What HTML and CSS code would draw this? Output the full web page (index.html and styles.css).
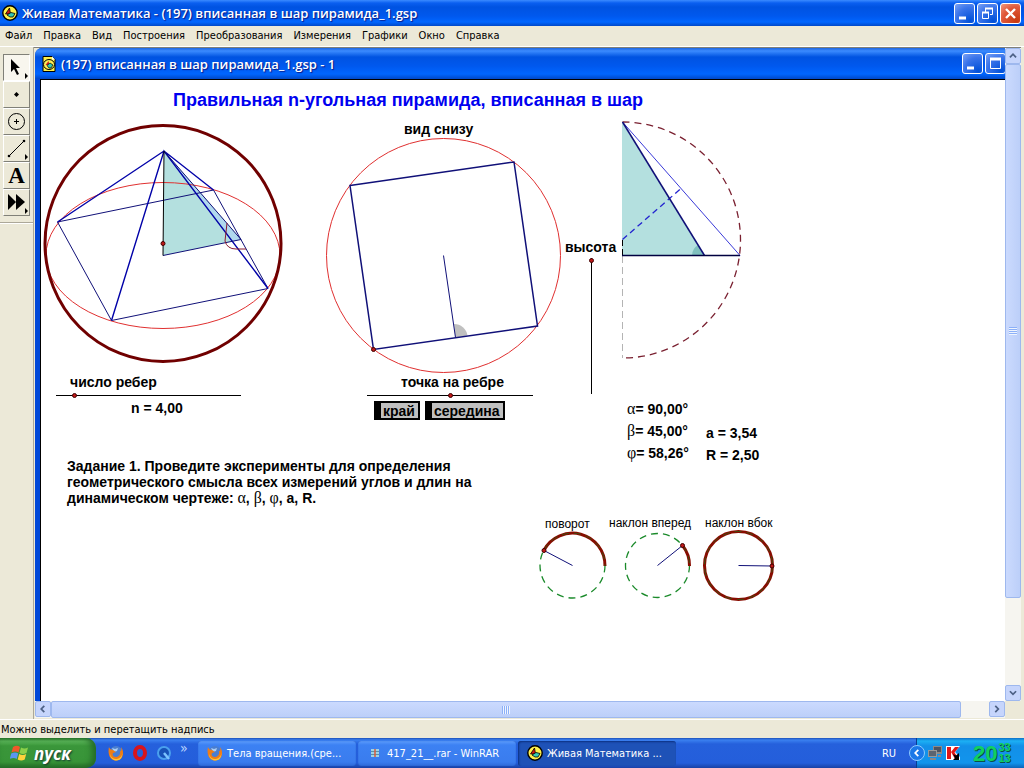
FILE: index.html
```html
<!DOCTYPE html>
<html lang="ru">
<head>
    <meta charset="UTF-8">
    <meta name="viewport" content="width=device-width, initial-scale=1.0">
    <title>Живая Математика</title>
    <link rel="stylesheet" href="styles.css">
</head>
<body>
    <svg width="0" height="0" class="defs">
        <symbol id="app-icon" viewBox="0 0 16 16">
            <circle cx="8" cy="8" r="7.2" fill="#fff04a" stroke="#000" stroke-width="1.4"/>
            <path d="M7.5 3l-4 6h5z" fill="#d41a10" stroke="#000" stroke-width=".8"/>
            <path d="M5 10l4-2.500 4 1-2 3.500H8z" fill="#35c9b4" stroke="#000" stroke-width=".8"/>
        </symbol>
        <symbol id="firefox" viewBox="0 0 16 16">
            <circle cx="8" cy="7.500" r="6.500" fill="#4a7ed0"/>
            <path d="M4 3l3 1 3-1-1 3-3 1z" fill="#a9cdf5"/>
            <path d="M1 2C0 6 0 15 8 15.500 16 15.500 16.500 6 13 2c1 3 0 4-1 4 1 4-2 6-4 6-3 0-4-2-3-4l3-1-3-2C3 5 1.500 4 1 2z" fill="#ef7d16"/>
            <path d="M2 9c1 4 4 5.500 7 5 3-.5 5-3 5.500-6-.5 7-4 7.500-6.500 7.500S2 13 2 9z" fill="#ffc233"/>
        </symbol>
    </svg>

    <header class="titlebar">
        <svg class="icon16"><use href="#app-icon"/></svg>
        <h1>Живая Математика - (197) вписанная в шар пирамида_1.gsp</h1>
        <div class="controls">
            <button class="ctl" aria-label="Свернуть"><svg viewBox="0 0 19 19"><path d="M4 14h7" stroke-width="3"/></svg></button>
            <button class="ctl" aria-label="Восстановить"><svg viewBox="0 0 19 19"><path d="M7.500 8V4.500h7v6H12M4.500 8.500h6v6h-6z"/><path d="M7 4.500h8M4 8.500h7" stroke-width="2"/></svg></button>
            <button class="ctl close" aria-label="Закрыть"><svg viewBox="0 0 19 19"><path d="M5 5l9 9M14 5l-9 9" stroke-width="2.400"/></svg></button>
        </div>
    </header>

    <nav class="menubar">
        <a href="#">Файл</a>
        <a href="#">Правка</a>
        <a href="#">Вид</a>
        <a href="#">Построения</a>
        <a href="#">Преобразования</a>
        <a href="#">Измерения</a>
        <a href="#">Графики</a>
        <a href="#">Окно</a>
        <a href="#">Справка</a>
    </nav>

    <div class="main">
        <aside class="toolbox">
            <div class="tools">
                <button class="tool active" aria-label="Стрелка"><svg viewBox="0 0 25 25"><path d="M7 4v13l3-3 3 6 2-1-3-6h4z"/><path d="M21 18v6l3-3z"/></svg></button>
                <button class="tool" aria-label="Точка"><svg viewBox="0 0 25 25"><path d="M12.500 10l2.500 2.500-2.500 2.500-2.500-2.500z"/></svg></button>
                <button class="tool" aria-label="Окружность"><svg viewBox="0 0 25 25"><circle cx="12.500" cy="12.500" r="8" fill="none" stroke="#000"/><path d="M12.500 10v5M10 12.500h5" stroke="#000"/></svg></button>
                <button class="tool" aria-label="Отрезок"><svg viewBox="0 0 25 25"><path d="M5 20L20 5" stroke="#000"/><circle cx="5" cy="20" r="1.300"/><circle cx="20" cy="5" r="1.300"/><path d="M21 18v6l3-3z"/></svg></button>
                <button class="tool letter">A</button>
                <button class="tool" aria-label="Свои инструменты"><svg viewBox="0 0 25 25"><path d="M4 4v16l8-8zM12 4v16l9-8z"/><path d="M21 18v6l3-3z"/></svg></button>
            </div>
        </aside>

        <div class="mdi">
            <section class="child">
                <div class="titlebar child-title">
                    <svg class="icon16" viewBox="0 0 16 16">
                        <path d="M2 .5h9l3 3v12H2z" fill="#fff04a" stroke="#000"/>
                        <path d="M11 .5l3 3h-3z" fill="#fff"/>
                        <ellipse cx="8" cy="8.500" rx="5.500" ry="5" fill="#ffee55" stroke="#000"/>
                        <path d="M7.500 5l-3 4h4z" fill="#c22"/>
                        <path d="M6 9.500l3-2.500 3 2-2 3H8z" fill="#35c9b4" stroke="#000" stroke-width=".7"/>
                    </svg>
                    <h2>(197) вписанная в шар пирамида_1.gsp - 1</h2>
                    <div class="controls">
                        <button class="ctl" aria-label="Свернуть окно"><svg viewBox="0 0 19 19"><path d="M4 14h7" stroke-width="3"/></svg></button>
                        <button class="ctl" aria-label="Развернуть окно"><svg viewBox="0 0 19 19"><path d="M4.500 4.500h10v10h-10z"/><path d="M4 5h11" stroke-width="3"/></svg></button>
                        <button class="ctl close" aria-label="Закрыть окно"><svg viewBox="0 0 19 19"><path d="M5 5l9 9M14 5l-9 9" stroke-width="2.400"/></svg></button>
                    </div>
                </div>

                <div class="canvas">
                    <svg class="drawing">
                        <g transform="translate(-41 -80)" fill="none">
                            <!-- pyramid inside the sphere -->
                            <path d="M164 151L163 255.500 241 239.500z" fill="#b4e0df"/>
                            <path d="M164 151L233.500 241 241 239.500z" fill="#b0d8ee"/>
                            <ellipse cx="163" cy="255.500" rx="117" ry="73" class="red"/>
                            <circle cx="163" cy="243.500" r="118" class="sphere"/>
                            <path d="M57.500 222L213.500 190 268 288.500 111.500 320.500z" class="navy"/>
                            <path d="M57.500 222L164 151 213.500 190M111.500 320.500L164 151 268 288.500" class="blue"/>
                            <path d="M163 255.500L241 239.500 164 151" class="navy"/>
                            <path d="M164 151L163 255.500" stroke="#000"/>
                            <path d="M227 223L225 241Q227 249 236 249L246 249" stroke="#8a1a30"/>
                            <circle cx="163" cy="243.500" r="2" class="dot"/>

                            <!-- bottom view -->
                            <path d="M455.500 337.500L454 324A13.500 13.500 0 0 1 467.500 335.500z" fill="#c0c0c0"/>
                            <circle cx="443.500" cy="255.500" r="117" class="red"/>
                            <path d="M350 185.500L514 162 537.500 326 373.500 349.500z" class="navy thick"/>
                            <path d="M443.500 255.500L455.500 337.500" class="navy"/>
                            <circle cx="373.500" cy="349.500" r="2" class="dot"/>

                            <!-- half of the axial section -->
                            <path d="M622 122V255.500H705z" fill="#b4e0df"/>
                            <path d="M692 255.500A12.500 12.500 0 0 1 698 245L704.500 255.500z" fill="#80c0be"/>
                            <path d="M622.500 122A118 118 0 0 1 622.500 358" class="arc"/>
                            <path d="M622.500 256V358" stroke="#b4b4b4" stroke-dasharray="7 4"/>
                            <path d="M622.500 240V255" stroke="#000" stroke-dasharray="6 3"/>
                            <path d="M622.500 122L740 255.500" stroke="#3a3ad8"/>
                            <path d="M622.500 239.500L681 188.500" stroke="#2222d0" stroke-width="1.300" stroke-dasharray="6 4"/>
                            <path d="M622.500 122L704.500 255.500" class="navy thick"/>
                            <path d="M622 255.500H740" stroke="#000040" stroke-width="1.400"/>

                            <!-- rotation dials -->
                            <circle cx="572.500" cy="565.500" r="32.500" class="dial"/>
                            <path d="M544 550A32.500 32.500 0 0 1 605 566" class="turn"/>
                            <path d="M544 550A32.500 32.500 0 0 1 605 566" class="turn-dash"/>
                            <path d="M572.500 565.500L544 550.500" class="navy"/>
                            <circle cx="544" cy="550.500" r="2" class="dot"/>
                            <circle cx="657.500" cy="565.500" r="32" class="dial"/>
                            <path d="M682.500 545.500A32 32 0 0 1 689.500 566" class="turn"/>
                            <path d="M682.500 545.500A32 32 0 0 1 689.500 566" class="turn-dash"/>
                            <path d="M657.500 565.500L682.500 545.500" class="navy"/>
                            <circle cx="682.500" cy="545.500" r="2" class="dot"/>
                            <circle cx="738.500" cy="565.500" r="34" class="turn"/>
                            <circle cx="738.500" cy="565.500" r="34" class="turn-dash"/>
                            <path d="M738.500 565.500L772 566" class="navy"/>
                            <circle cx="772" cy="566" r="2" class="dot"/>
                        </g>
                    </svg>

                    <h3 class="item heading">Правильная n-угольная пирамида, вписанная в шар</h3>
                    <span class="item bottom-view">вид снизу</span>
                    <label class="item edges-label" for="edges">число ребер</label>
                    <input class="item edges" id="edges" type="range" min="0" max="100" value="9">
                    <span class="item edges-value">n = 4,00</span>
                    <label class="item point-label" for="point">точка на ребре</label>
                    <input class="item point" id="point" type="range" min="0" max="100" value="50">
                    <div class="item actions">
                        <button>край</button>
                        <button>середина</button>
                    </div>
                    <label class="item height-label" for="height">высота</label>
                    <input class="item height" id="height" type="range" min="0" max="100" value="100">
                    <div class="item angles">
                        <div><i>α</i>= 90,00°</div>
                        <div><i>β</i>= 45,00°</div>
                        <div><i>φ</i>= 58,26°</div>
                    </div>
                    <div class="item lengths">
                        <div>a = 3,54</div>
                        <div>R = 2,50</div>
                    </div>
                    <p class="item task">Задание 1. Проведите эксперименты для определения<br>геометрического смысла всех измерений углов и длин на<br>динамическом чертеже: <i>α</i>, <i>β</i>, <i>φ</i>, a, R.</p>
                    <span class="item small turn-label">поворот</span>
                    <span class="item small forward-label">наклон вперед</span>
                    <span class="item small side-label">наклон вбок</span>
                </div>
            </section>

            <div class="scroll vertical">
                <button aria-label="Вверх"><svg viewBox="0 0 16 16"><path d="M4.500 9.500L8 6l3.500 3.500"/></svg></button>
                <div class="track"><div class="thumb"></div></div>
                <button aria-label="Вниз"><svg viewBox="0 0 16 16"><path d="M4.500 6L8 9.500 11.500 6"/></svg></button>
            </div>
            <div class="scroll horizontal">
                <button aria-label="Влево"><svg viewBox="0 0 16 16"><path d="M9.500 4.500L6 8l3.500 3.500"/></svg></button>
                <div class="track"><div class="thumb"></div></div>
                <button aria-label="Вправо"><svg viewBox="0 0 16 16"><path d="M6 4.500L9.500 8 6 11.500"/></svg></button>
            </div>
        </div>
    </div>

    <div class="status">Можно выделить и перетащить надпись</div>

    <footer class="taskbar">
        <button class="start">
            <svg viewBox="0 0 20 20">
                <path d="M3 4q4-2.500 7 0L8.500 9.500q-3-2-7 0z" fill="#f0582a"/>
                <path d="M11 4.500q3.500 2 7 0L16.500 10q-3.500 2-7 0z" fill="#8cd04a"/>
                <path d="M1.200 10.500q4-2 7 0L6.700 16q-3-2-7 0z" fill="#5a96f0"/>
                <path d="M9.200 11q3.500 2 7 0l-1.500 5.500q-3.500 2-7 0z" fill="#ffd23c"/>
            </svg>
            пуск
        </button>
        <div class="quick">
            <a href="#" aria-label="Firefox"><svg class="icon16"><use href="#firefox"/></svg></a>
            <a href="#" aria-label="Opera"><svg class="icon16" viewBox="0 0 16 16"><ellipse cx="8" cy="8" rx="5" ry="6" fill="none" stroke="#d8141c" stroke-width="4"/></svg></a>
            <a href="#" aria-label="QuickTime"><svg class="icon16" viewBox="0 0 16 16"><circle cx="8" cy="8" r="6" fill="#1752b8" stroke="#4aa0ee" stroke-width="2"/><path d="M8 8l5 6" stroke="#7cc4ff" stroke-width="2.500"/></svg></a>
            <span class="more">»</span>
        </div>
        <div class="tasks">
            <button class="task-btn"><svg class="icon16"><use href="#firefox"/></svg>Тела вращения.(сре...</button>
            <button class="task-btn"><svg class="icon16" viewBox="0 0 16 16"><path d="M4 4h8v8H4z" fill="#9cd3e8"/><path d="M4 6.500h8M4 9.500h8" stroke="#5a8fa8"/><path d="M8 4v8" stroke="#d85b3c" stroke-width="1.500"/></svg>417_21__.rar - WinRAR</button>
            <button class="task-btn current"><svg class="icon16"><use href="#app-icon"/></svg>Живая Математика ...</button>
        </div>
        <span class="lang">RU</span>
        <div class="tray">
            <button class="expand" aria-label="Показать значки"><svg viewBox="0 0 16 16"><path d="M9.500 4.500L6 8l3.500 3.500" fill="none" stroke="#fff" stroke-width="2"/></svg></button>
            <svg class="icon16" viewBox="0 0 16 16"><path d="M6 1h9v8H6z" fill="#8a8a8a"/><path d="M7 2h7v5H7z" fill="#4c5360"/><path d="M1 5h9v7H1z" fill="#999"/><path d="M2 6h7v5H2z" fill="#5b6470"/><path d="M3 13h6v2H3zM11 10h3v2h-3z" fill="#888"/></svg>
            <svg class="icon16" viewBox="0 0 16 16"><path d="M1 1h14L10 7l5 5v3H1z" fill="#fff"/><path d="M2 2h4v12H2zM6 7l4-5h4L9.500 7.500 14 14h-4z" fill="#e01818"/><path d="M8 9l3 1.500L14 8v7H8l2-2z" fill="#000"/></svg>
            <div class="clock"><b>20</b><span>33<br>13</span></div>
        </div>
    </footer>
</body>
</html>
```
FILE: styles.css
```css
* {
    box-sizing: border-box;
}
body {
    margin: 0;
    height: 100vh;
    display: flex;
    flex-direction: column;
    overflow: hidden;
    background: #ece9d8;
    color: #000;
    font-family: "DejaVu Sans Condensed", "Noto Sans", sans-serif;
    font-size: 11px;
}
button {
    font: inherit;
    padding: 0;
    border: 0;
}
a {
    color: inherit;
    text-decoration: none;
}
svg {
    display: block;
}
.defs {
    position: absolute;
}
.icon16 {
    width: 16px;
    height: 16px;
    flex: none;
}

/* title bars */
.titlebar {
    display: flex;
    align-items: center;
    flex: none;
    height: 26px;
    padding: 0 3px 0 2px;
    gap: 4px;
    background: linear-gradient(#3b8bff 0, #0a5ff0 3px, #0053e1 7px, #0058ee 16px, #0066ff 22px, #0048c8 26px);
    color: #fff;
}
.titlebar h1, .titlebar h2 {
    flex: 1;
    margin: 0;
    font-family: "Open Sans", sans-serif;
    font-size: 13px;
    font-weight: 600;
    white-space: nowrap;
    text-shadow: 1px 1px 1px #0a1883;
}
.controls {
    display: flex;
    gap: 2px;
}
.ctl {
    width: 21px;
    height: 21px;
    border: 1px solid #fff;
    border-radius: 3px;
    background: radial-gradient(circle at 80% 90%, #0050d8, #3a74ea 60%, #7ba2f5);
}
.ctl.close {
    background: radial-gradient(circle at 80% 90%, #c83a10, #e0583a 60%, #f09a80);
}
.ctl path {
    fill: none;
    stroke: #fff;
}

/* menu */
.menubar {
    display: flex;
    align-items: center;
    flex: none;
    height: 21px;
    padding: 0 5px 2px;
    gap: 11px;
    border-bottom: 1px solid #fff;
}

.main {
    flex: 1;
    display: flex;
    min-height: 0;
}
.toolbox {
    flex: none;
    width: 34px;
    border-right: 1px solid #aca899;
}
.tools {
    height: 176px;
    padding: 7px 3px;
    border-bottom: 1px solid #aca899;
    box-shadow: 0 1px #fff;
}
.tool {
    display: block;
    width: 27px;
    height: 27px;
    background: #ece9d8;
    border: 1px solid;
    border-color: #fff #808078 #808078 #fff;
}
.tool.active {
    background: #f8f6ee;
    border-color: #808078 #fff #fff #808078;
}
.tool.letter {
    font-family: "Liberation Serif", serif;
    font-size: 23px;
    font-weight: bold;
    line-height: 24px;
}

/* document area */
.mdi {
    flex: 1;
    display: grid;
    grid-template-columns: minmax(0, 1fr) 16px;
    grid-template-rows: minmax(0, 1fr) 17px;
    margin-right: 3px;
    padding: 1px 0 1px 1px;
    overflow: hidden;
    box-shadow: inset 0 1px #808078;
}
.child {
    display: flex;
    flex-direction: column;
    /* the window is wider than the visible area */
    width: calc(100% + 30px);
    padding-left: 5px;
    background: #0048d8;
    border-radius: 7px 0 0 0;
}
.child-title {
    height: 31px;
    margin-left: -5px;
    padding: 0 6px;
    border-radius: 7px 0 0 0;
    background: linear-gradient(#1e66e0 0, #3b8bff 3px, #0053e1 9px, #0058ee 18px, #0066ff 26px, #0048c8 31px);
}
.canvas {
    position: relative;
    flex: 1;
    overflow: hidden;
    background: #fff;
    border: solid #000;
    border-width: 1px 0 0 1px;
    font-family: "Liberation Sans", sans-serif;
    font-size: 14px;
    font-weight: bold;
    line-height: 16px;
}
.drawing {
    width: 100%;
    height: 100%;
}
.red {
    stroke: #e03030;
}
.sphere {
    stroke: #700000;
    stroke-width: 3;
}
.navy {
    stroke: #101078;
}
.thick {
    stroke-width: 1.5;
}
.blue {
    stroke: #0000a8;
    stroke-width: 1.4;
}
.dot {
    fill: #c01818;
    stroke: #400000;
}
.arc {
    stroke: #7a2030;
    stroke-width: 1.3;
    stroke-dasharray: 7 5;
}
.dial {
    stroke: #1a8a2a;
    stroke-width: 1.3;
    stroke-dasharray: 7 5;
}
.turn {
    stroke: #880c00;
    stroke-width: 3;
}
.turn-dash {
    stroke: #3c5010;
    stroke-dasharray: 7 5;
}

/* objects on the sketch */
.item {
    position: absolute;
    margin: 0;
    white-space: nowrap;
}
.item i {
    font-family: "Liberation Serif", serif;
    font-style: normal;
    font-weight: normal;
    font-size: 16px;
    line-height: 16px;
}
.heading {
    left: 132px;
    top: 10px;
    font-size: 18px;
    line-height: 20px;
    color: #0000f0;
}
.bottom-view {
    left: 363px;
    top: 41px;
}
.edges-label {
    left: 29px;
    top: 294px;
}
.edges-value {
    left: 90px;
    top: 320px;
}
.point-label {
    left: 360px;
    top: 294px;
}
.height-label {
    left: 524px;
    top: 159px;
}
.angles {
    left: 586px;
    top: 318px;
    line-height: 22px;
}
.lengths {
    left: 665px;
    top: 342px;
    line-height: 22px;
}
.task {
    left: 26px;
    top: 378px;
}
.small {
    font-size: 12px;
    font-weight: normal;
}
.turn-label {
    left: 504px;
    top: 436px;
}
.forward-label {
    left: 568px;
    top: 435px;
}
.side-label {
    left: 664px;
    top: 435px;
}
.canvas input {
    appearance: none;
    height: 7px;
    background: linear-gradient(#000, #000) center / 100% 1px no-repeat;
}
.canvas input::-webkit-slider-thumb {
    appearance: none;
    width: 5px;
    height: 5px;
    border: 1px solid #400000;
    border-radius: 50%;
    background: #c01818;
}
.canvas .edges {
    left: 15px;
    top: 312px;
    width: 185px;
}
.canvas .point {
    left: 326px;
    top: 312px;
    width: 166px;
}
.canvas .height {
    left: 547px;
    top: 178px;
    width: 7px;
    height: 136px;
    writing-mode: vertical-lr;
    direction: rtl;
    background: linear-gradient(#000, #000) center / 1px 100% no-repeat;
}
.actions {
    display: flex;
    gap: 5px;
    left: 333px;
    top: 321px;
}
.actions button {
    height: 19px;
    padding: 0 3px 0 2px;
    border: 2px solid #000;
    border-left-width: 7px;
    background: #c0c0c0;
    color: #000;
    line-height: 14px;
}

/* scroll bars */
.scroll {
    display: flex;
    background: #f6f5f0;
    z-index: 1;
}
.scroll button {
    flex: none;
    width: 16px;
    height: 16px;
    border: 1px solid #9eb8ee;
    border-radius: 2px;
    background: #c6d5fc;
}
.scroll button path {
    fill: none;
    stroke: #4d6185;
    stroke-width: 2;
}
.track {
    flex: 1;
    display: flex;
}
.thumb {
    display: flex;
    border: 1px solid #9eb8ee;
    border-radius: 2px;
    background: #c4d4fc;
}
.thumb::before {
    content: "";
    width: 8px;
    height: 8px;
    margin: auto;
}
.vertical {
    flex-direction: column;
}
.vertical .track {
    flex-direction: column;
}
.vertical .thumb {
    height: 86%;
    background: linear-gradient(90deg, #cbdafe, #bccff9);
}
.vertical .thumb::before {
    background: repeating-linear-gradient(#8cb0f8 0 1px, #eef4fe 1px 2px);
}
.horizontal .thumb {
    width: 97%;
    background: linear-gradient(#cbdafe, #bccff9);
}
.horizontal .thumb::before {
    background: repeating-linear-gradient(90deg, #8cb0f8 0 1px, #eef4fe 1px 2px);
}

.status {
    flex: none;
    height: 19px;
    padding-left: 1px;
    border-top: 1px solid #fff;
    line-height: 20px;
}

/* taskbar */
.taskbar {
    display: flex;
    align-items: center;
    flex: none;
    height: 30px;
    background: linear-gradient(#1c50b8 0, #3a80f0 2px, #2560dc 6px, #245edb 25px, #1941a5 30px);
    color: #fff;
}
.start {
    display: flex;
    align-items: center;
    gap: 4px;
    width: 96px;
    height: 30px;
    padding: 0 10px;
    border-radius: 0 10px 10px 0;
    background: linear-gradient(#2a7a2c 0, #5cb85a 3px, #3a963a 8px, #389438 24px, #256f27 30px);
    box-shadow: inset -4px 0 6px #246a28;
    color: #fff;
    font-family: "Open Sans", sans-serif;
    font-size: 17px;
    font-style: italic;
    font-weight: bold;
    text-shadow: 1px 1px 2px #133;
}
.start svg {
    width: 20px;
    height: 20px;
    flex: none;
}
.quick {
    display: flex;
    align-items: center;
    gap: 8px;
    width: 102px;
    padding-left: 12px;
}
.more {
    margin-bottom: 10px;
    font-size: 14px;
    color: #bcd6ff;
}
.tasks {
    flex: 1;
    display: flex;
    gap: 2px;
}
.task-btn {
    display: flex;
    align-items: center;
    gap: 4px;
    width: 158px;
    height: 25px;
    padding: 0 9px;
    border-radius: 3px;
    background: linear-gradient(#5c9cfc, #3c81f3 4px, #3a7cee 21px, #2f6ad8);
    box-shadow: inset 0 0 1px #1c4cb0;
    color: #fff;
    white-space: nowrap;
}
.task-btn.current {
    background: #1e52b7;
    box-shadow: inset 1px 1px 2px #0c3080;
}
.lang {
    padding-right: 20px;
}
.tray {
    display: flex;
    align-items: center;
    gap: 2px;
    width: 108px;
    height: 30px;
    background: linear-gradient(#0d70c8 0, #1cb0f4 3px, #1290e8 8px, #1294ec 25px, #0d64b8 30px);
    border-left: 1px solid #0a3c90;
}
.expand {
    width: 16px;
    height: 16px;
    margin-left: -8px;
    border: 1px solid #8ecbff;
    border-radius: 50%;
    background: #1a78e8;
}
.clock {
    display: flex;
    align-items: center;
    gap: 1px;
    margin-left: 10px;
    font-family: "Liberation Sans", sans-serif;
    font-size: 11px;
    font-weight: bold;
    line-height: 11px;
    color: #10d060;
    text-shadow: 1px 1px #0a5048;
}
.clock b {
    font-size: 22px;
}
```
